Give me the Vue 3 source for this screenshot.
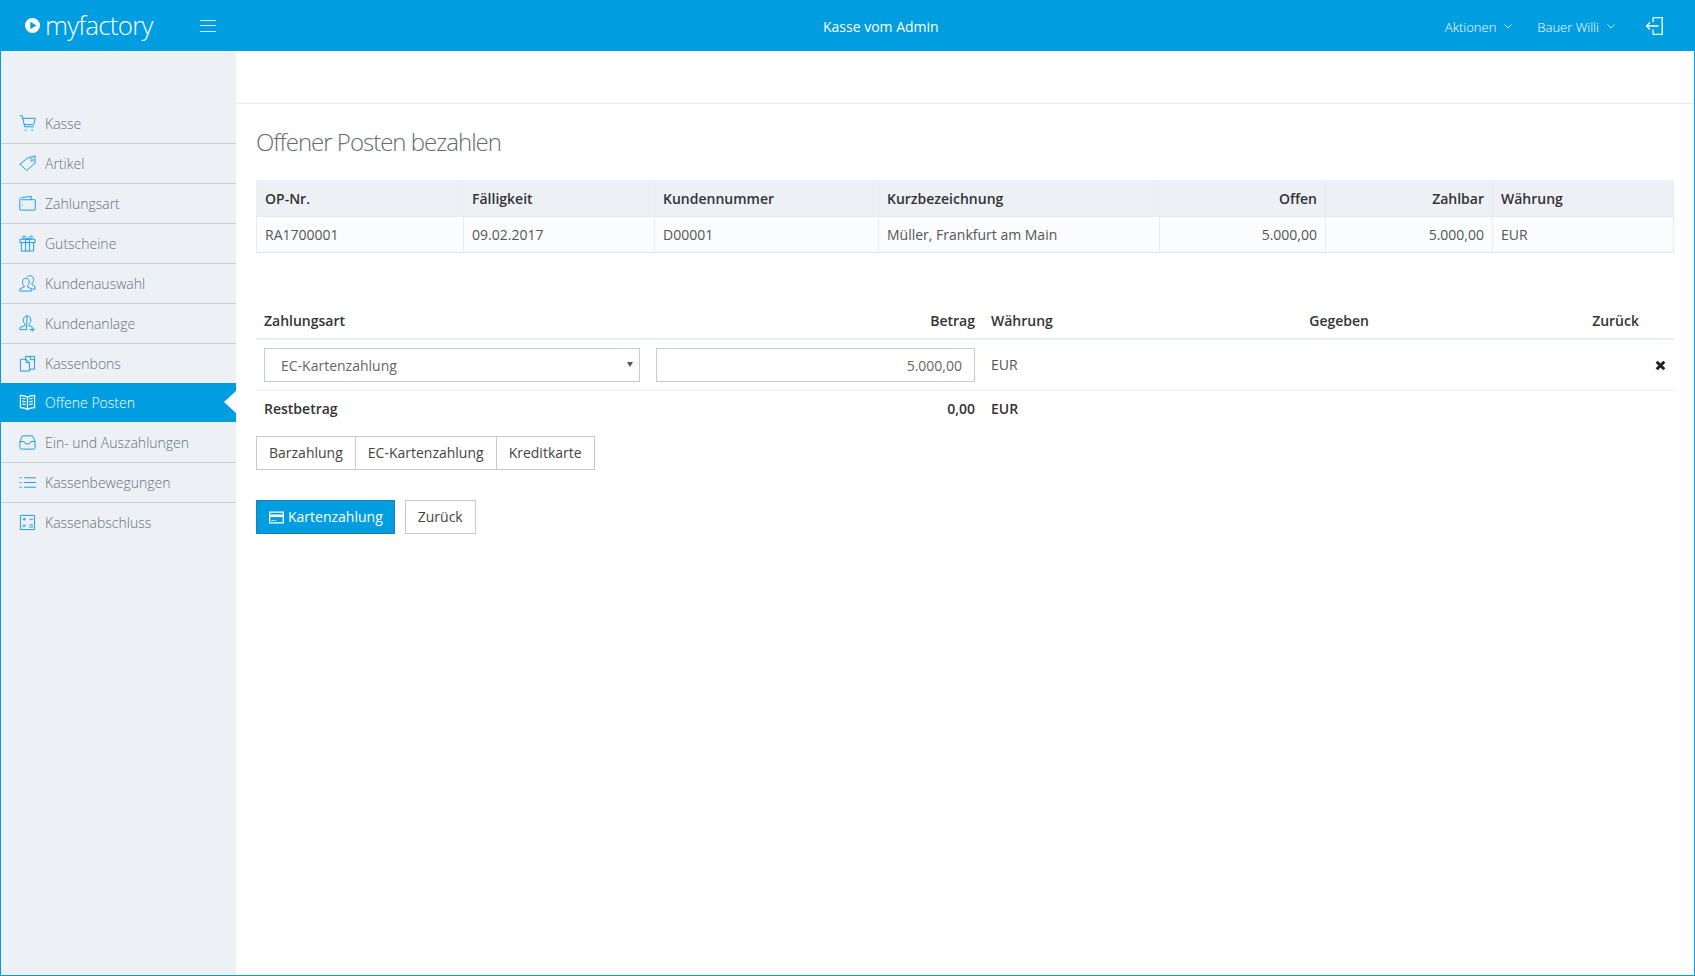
<script setup>
const nav = [
  { label: 'Kasse', d: 'M.8 .8h2.600L6 12.500h9.600M3.900 3.500h13.300l-1.600 6.700H5.500M6 16h2M13 16h2' },
  { label: 'Artikel', d: 'M1 9.500 9.500 3 17 1v7.500L8 16.500zM13.600 3.800a1.400 1.400 0 1 0 .01 0z' },
  { label: 'Zahlungsart', d: 'M.8 6v9a1 1 0 0 0 1 1h14.900a.5.5 0 0 0 .5-.5v-10a.5.5 0 0 0-.5-.5H2.500M.8 6c0-2 .5-3 2-3.200L13 1.500V5M3 10.500h1' },
  { label: 'Gutscheine', d: 'M2.500 8v9h13V8M1 4.500h16V8H1zM7 4.500V17M11 4.500V17M9 4.500C7 1 4 .2 3.800 2.200S6.500 4.500 9 4.500c2.500 0 5.400-.3 5.200-2.300S11 1 9 4.500' },
  { label: 'Kundenauswahl', d: 'M7 3.500c2.300 0 3.800 1.700 3.800 4 0 1.800-.8 3.200-1.800 4v1.200l4.500 2V17H1v-2.300l4.500-2v-1.200c-1-.8-1.800-2.200-1.800-4 0-2.300 1-4 3.300-4zM8.500 2.300C9.300 1.200 10.500.8 11.700.8c2.300 0 3.800 1.700 3.800 4 0 1.800-.8 3.200-1.800 4V10l3.300 2V15h-3' },
  { label: 'Kundenanlage', d: 'M8.500 1c2.500 0 4 1.900 4 4.300 0 2-.9 3.400-2 4.300v1.600l3.500 1.500M8 15.500H1v-2.300l5.500-2V9.600c-1.100-.9-2-2.300-2-4.300C4.500 2.900 6 1 8.500 1zM11 15.500h6M14 12.700v5' },
  { label: 'Kassenbons', d: 'M1.500 4.500h6l3.500 3.500v9H1.500zM7.500 4.500V8H11M7 4.500v-3h9.500V15H11M12 1.500V5h4.500' },
  { label: 'Offene Posten', active: true, d: 'M9 3.500C7 2 4 1.500 1.500 1.500v13c2.500 0 5.500.5 7.500 2 2-1.500 5-2 7.500-2v-13C14 1.500 11 2 9 3.500zM9 3.500v13M3.500 4.500l3.500.8M3.500 7.500l3.500.8M3.500 10.500l3.500.8M14.500 4.500l-3.500.8M14.500 7.500l-3.500.8M14.500 10.500l-3.500.8' },
  { label: 'Ein- und Auszahlungen', d: 'M1 8 3.500 2h11L17 8v6.500a1.500 1.500 0 0 1-1.500 1.500h-13A1.500 1.500 0 0 1 1 14.500zM1 8h4.500L7 10.500h4L12.500 8H17' },
  { label: 'Kassenbewegungen', d: 'M.5 4h2.200M.5 9h2.200M.5 14h2.200M5.500 4H18M5.500 9H18M5.500 14H18' },
  { label: 'Kassenabschluss', d: 'M1.500 1.500h15v15h-15zM3.800 5.500h3.400M5.500 3.800v3.400M4 11l3 3M7 11l-3 3M11 5.500h4M11 11.500h4M11 13.800h4' }
]
const gaps = ['Barzahlung', 'EC-Kartenzahlung', 'Kreditkarte']
</script>

<template>
  <div class="page">
    <header class="topbar">
      <div class="brand">
        <span class="logo-mark">
          <svg viewBox="0 0 15 15" width="15" height="15"><circle cx="7.500" cy="7.500" r="7.500" fill="#fff" /><path d="M5.300 3.800v7.400l6-3.700z" fill="#009de0" /></svg>
        </span>
        <span class="logo-text">myfactory</span>
        <span class="burger"><i></i><i></i><i></i></span>
      </div>
      <div class="page-name">Kasse vom Admin</div>
      <div class="top-actions">
        <span class="top-link first"><span>Aktionen</span>
          <svg class="chev" viewBox="0 0 8 5" width="8" height="5"><path d="M.5.500 4 4 7.500.500" /></svg>
        </span>
        <span class="top-link"><span>Bauer Willi</span>
          <svg class="chev" viewBox="0 0 8 5" width="8" height="5"><path d="M.5.500 4 4 7.500.500" /></svg>
        </span>
        <svg class="logout" viewBox="0 0 18 18" width="18" height="18"><path d="M8 .7h9.200v16.600H8M8 .7v4.600M8 17.300v-4.800M13.500 9H1.500M5 5.500 1.500 9 5 12.500" /></svg>
      </div>
    </header>

    <div class="body">
      <aside class="sidebar">
        <ul class="nav">
          <li v-for="(item, i) in nav" :key="item.label" class="nav-item" :class="{ active: item.active, 'before-active': i === 6 }">
            <svg class="nav-icon" viewBox="0 0 18 18" width="17" height="17"><path :d="item.d" /></svg>
            <span>{{ item.label }}</span>
          </li>
        </ul>
      </aside>

      <main class="main">
        <div class="subbar"></div>
        <section class="content">
          <h1>Offener Posten bezahlen</h1>

          <table class="op-table">
            <colgroup>
              <col class="c1" /><col class="c2" /><col class="c3" /><col class="c4" /><col class="c5" /><col class="c6" /><col />
            </colgroup>
            <thead>
              <tr>
                <th>OP-Nr.</th><th>Fälligkeit</th><th>Kundennummer</th><th>Kurzbezeichnung</th>
                <th class="r">Offen</th><th class="r">Zahlbar</th><th>Währung</th>
              </tr>
            </thead>
            <tbody>
              <tr>
                <td>RA1700001</td><td>09.02.2017</td><td>D00001</td><td>Müller, Frankfurt am Main</td>
                <td class="r">5.000,00</td><td class="r">5.000,00</td><td>EUR</td>
              </tr>
            </tbody>
          </table>

          <table class="pay-table">
            <colgroup>
              <col class="p1" /><col class="p2" /><col class="p3" /><col class="p4" /><col class="p5" /><col />
            </colgroup>
            <thead>
              <tr>
                <th>Zahlungsart</th><th class="r">Betrag</th><th>Währung</th><th class="r">Gegeben</th><th class="r">Zurück</th><th></th>
              </tr>
            </thead>
            <tbody>
              <tr class="entry">
                <td>
                  <div class="select-wrap">
                    <select class="field">
                      <option>EC-Kartenzahlung</option>
                      <option>Barzahlung</option>
                      <option>Kreditkarte</option>
                    </select>
                  </div>
                </td>
                <td><input class="field amount" type="text" value="5.000,00" /></td>
                <td>EUR</td>
                <td></td>
                <td></td>
                <td class="x-cell">
                  <svg viewBox="0 0 11 11" width="11" height="11"><path d="M1.700 1.700l7.600 7.600M9.300 1.700l-7.600 7.600" /></svg>
                </td>
              </tr>
              <tr class="rest">
                <td>Restbetrag</td><td class="r">0,00</td><td>EUR</td><td></td><td></td><td></td>
              </tr>
            </tbody>
          </table>

          <div class="btn-group">
            <button v-for="g in gaps" :key="g" class="btn" type="button">{{ g }}</button>
          </div>

          <div class="actions">
            <button class="btn primary" type="button">
              <svg viewBox="0 0 15 13" width="15" height="13"><path d="M.7 1.200h13.600v10.600H.7z" fill="none" stroke="#fff" stroke-width="1.300" /><path d="M1 3.500h13v2.600H1z" fill="#fff" /><path d="M2.500 9.500h2M5.500 9.500h1.500" stroke="#fff" /></svg>
              <span>Kartenzahlung</span>
            </button>
            <button class="btn" type="button">Zurück</button>
          </div>
        </section>
      </main>
    </div>
  </div>
</template>

<style>
body { margin: 0; background: #fff; }
</style>

<style scoped>
.page {
  height: 976px;
  box-sizing: border-box;
  display: flex;
  flex-direction: column;
  font-family: "Open Sans", "Liberation Sans", sans-serif;
  font-size: 14px;
  color: #555;
  border: 1px solid #009de0;
  border-top: 0;
  overflow: hidden;
}
.topbar {
  height: 51px;
  flex: none;
  margin: 0 -1px;
  display: flex;
  align-items: center;
  background: #009de0;
  color: #fff;
}
.brand {
  width: 823px;
  flex: none;
  display: flex;
  align-items: center;
  padding-left: 25px;
  box-sizing: border-box;
}
.logo-mark { display: flex; margin-right: 5px; }
.logo-text { font-size: 26px; font-weight: 300; line-height: 30px; letter-spacing: -0.8px; position: relative; top: -1px; }
.burger {
  margin-left: 47px;
  width: 16px;
  display: flex;
  flex-direction: column;
  gap: 4.500px;
}
.burger i { display: block; height: 1px; background: #cfeaf8; }
.page-name { font-size: 14px; line-height: 20px; padding-top: 2px; }
.top-actions {
  margin-left: auto;
  display: flex;
  align-items: center;
  padding-right: 32px;
  padding-top: 2px;
}
.top-link {
  font-size: 13px;
  font-weight: 300;
  display: flex;
  align-items: center;
  gap: 8px;
  margin-right: 27px;
}
.top-link.first { margin-right: 25px; }
.chev { fill: none; stroke: #cfeaf8; stroke-width: 1; }
.logout { fill: none; stroke: #fff; stroke-width: 1.300; margin-left: 3px; margin-top: -2px; }

.body { flex: 1; display: flex; min-height: 0; }
.sidebar {
  width: 235px;
  flex: none;
  background: #edf1f5;
  padding-top: 53px;
}
.nav { list-style: none; margin: 0; padding: 0; }
.nav-item {
  height: 40px;
  box-sizing: border-box;
  display: flex;
  align-items: center;
  padding-left: 18px;
  gap: 9px;
  border-bottom: 1px solid #c9ced3;
  color: #6a6f78;
  font-weight: 300;
  font-size: 14px;
  position: relative;
}
.nav-item:last-child { border-bottom-color: transparent; }
.nav-item.before-active { height: 39px; border-bottom: 0; }
.nav-icon { fill: none; stroke: #1c9ce6; stroke-width: 1.050; flex: none; }
.nav-item.active {
  height: 39px;
  margin-bottom: 1px;
  background: #009de0;
  color: #fff;
  border-bottom: 0;
}
.nav-item.active .nav-icon { stroke: #fff; stroke-width: 1.300; }
.nav-item.active::after {
  content: "";
  position: absolute;
  right: 0;
  top: 8px;
  border-style: solid;
  border-width: 11px 12px 11px 0;
  border-color: transparent #fff transparent transparent;
}

.main { flex: 1; min-width: 0; display: flex; flex-direction: column; }
.subbar { height: 52px; flex: none; border-bottom: 1px solid #e6e9ed; }
.content { padding: 21px 20px 0; }
h1 {
  margin: 0 0 22px;
  font-size: 24px;
  font-weight: 300;
  line-height: 33px;
  letter-spacing: -1px;
  color: #666a70;
}
table { width: 100%; border-collapse: collapse; table-layout: fixed; }
th { font-weight: 600; color: #333; text-align: left; }
.r { text-align: right; }

.c1 { width: 207px; } .c2 { width: 191px; } .c3 { width: 224px; }
.c4 { width: 281px; } .c5 { width: 166px; } .c6 { width: 167px; }
.op-table th, .op-table td { padding: 0 8px; border: 1px solid #e8ecf0; }
.op-table thead tr { height: 36px; background: #edf1f5; }
.op-table thead th { border-top-color: #edf1f5; border-bottom-color: #e4e9ee; }
.op-table tbody tr { height: 36px; background: #fbfcfd; }
.op-table tbody td { border-bottom-color: #e1e5ea; }

.p1 { width: 392px; } .p2 { width: 335px; } .p3 { width: 140px; }
.p4 { width: 254px; } .p5 { width: 270px; }
.pay-table { margin-top: 49px; }
.pay-table th, .pay-table td { padding: 0 8px; }
.pay-table thead tr { height: 37px; }
.pay-table thead th { border-bottom: 2px solid #e8edf2; }
.entry { height: 51px; }
.entry td { border-bottom: 1px solid #e8edf2; }
.rest { height: 37px; }
.rest td { font-weight: 600; color: #333; }

.select-wrap { position: relative; display: block; }
.select-wrap::after {
  content: "";
  position: absolute;
  right: 7px;
  top: 14px;
  border-style: solid;
  border-width: 5px 3px 0 3px;
  border-color: #555 transparent transparent transparent;
  pointer-events: none;
}
.field {
  display: block;
  width: 100%;
  height: 34px;
  box-sizing: border-box;
  margin: 0;
  border: 1px solid #c4cbdf;
  border-radius: 0;
  background: #fff;
  font: inherit;
  color: #666;
  outline: 0;
  appearance: none;
}
select.field { padding: 2px 24px 0 16px; }
.amount { text-align: right; padding: 2px 12px 0; }
.x-cell { text-align: center; padding: 0 !important; }
.x-cell svg { display: block; margin: 1px auto 0; fill: none; stroke: #222; stroke-width: 3; }

.btn-group { display: flex; margin-top: 9px; }
.btn {
  height: 34px;
  box-sizing: border-box;
  padding: 0 12px 2px;
  border: 1px solid #c9c9c9;
  background: #fff;
  color: #444;
  font: inherit;
  border-radius: 0;
  display: inline-flex;
  align-items: center;
}
.btn-group .btn + .btn { margin-left: -1px; }
.actions { display: flex; gap: 10px; margin-top: 30px; }
.primary {
  background: #009de0;
  color: #fff;
  border-color: #1b7fb3;
  gap: 4px;
  padding: 0 11px 0 12px;
}
.primary span { position: relative; top: -1px; }
</style>
